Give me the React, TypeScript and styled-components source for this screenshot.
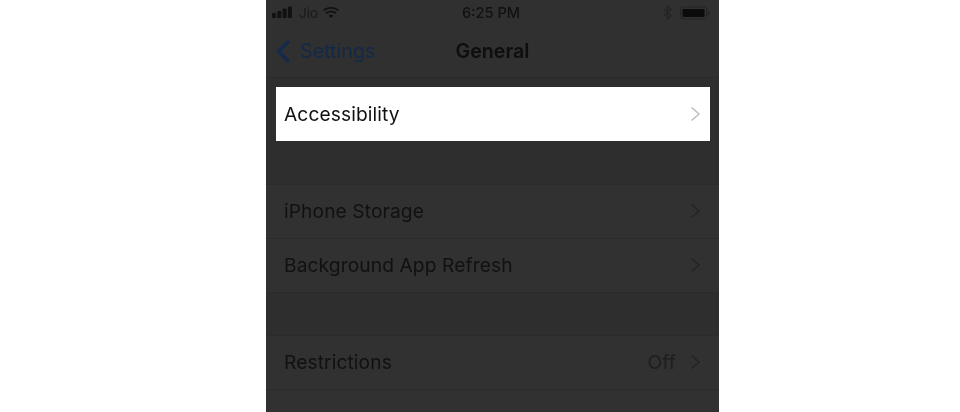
import React from "react";
import styled, { createGlobalStyle } from "styled-components";

const Global = createGlobalStyle`
  html, body { margin: 0; padding: 0; background: #fff; }
  body { font-family: "Inter", "Liberation Sans", Arial, sans-serif; overflow: hidden; }
`;

const Page = styled.div`
  width: 960px;
  height: 412px;
  display: flex;
  justify-content: flex-start;
  padding-left: 266px;
  box-sizing: border-box;
  overflow: hidden;
  background: #fff;
`;

const Phone = styled.div`
  width: 453px;
  height: 412px;
  background: #2e2e2e;
  display: flex;
  flex-direction: column;
  overflow: hidden;
  filter: blur(0.35px);
  & > * {
    flex-shrink: 0;
  }
`;

const StatusBar = styled.div`
  height: 25px;
  display: grid;
  grid-template-columns: 1fr auto 1fr;
  align-items: center;
  padding: 0 9px 0 6px;
  background: #303030;
  color: #111111;
  font-size: 14.6px;
  font-weight: 500;
`;

const StatusLeft = styled.div`
  display: flex;
  align-items: center;
  gap: 4px;
  color: #1a1a1a;
  font-size: 13.5px;
  font-weight: 400;
`;

const StatusRight = styled.div`
  display: flex;
  align-items: center;
  justify-content: flex-end;
  gap: 8px;
`;

const Nav = styled.div`
  height: 53px;
  display: grid;
  grid-template-columns: 1fr auto 1fr;
  align-items: center;
  padding: 0 9px;
  box-sizing: border-box;
  background: #303030;
  border-bottom: 1px solid #2b2b2b;
`;

const Back = styled.div`
  display: flex;
  align-items: center;
  gap: 8px;
  color: #142948;
  font-size: 19.7px;
`;

const Title = styled.div`
  color: #0e0e0e;
  font-size: 19.6px;
  font-weight: 600;
`;

const Group = styled.div<{ $top: number }>`
  margin-top: ${(p) => p.$top}px;
  display: flex;
  flex-direction: column;
`;

const Row = styled.div<{ $active?: boolean }>`
  height: 54px;
  box-sizing: border-box;
  display: flex;
  align-items: center;
  margin: ${(p) => (p.$active ? "0 9px 0 10px" : "0")};
  padding-left: ${(p) => (p.$active ? "8px" : "18px")};
  padding-right: ${(p) => (p.$active ? "9px" : "18px")};
  padding-bottom: ${(p) => (p.$active ? "0" : "2px")};
  background: ${(p) => (p.$active ? "#ffffff" : "#313131")};
  border-top: ${(p) => (p.$active ? "none" : "1px solid #2b2b2b")};
  color: #111111;
  font-size: 19.2px;
  letter-spacing: 0.1px;
`;

const Divider = styled.div`
  height: 1px;
  background: #2b2b2b;
`;

const Label = styled.span`
  flex: 1;
`;

const Value = styled.span`
  color: #1e1e1e;
  font-size: 19.2px;
  margin-right: 14px;
`;

const Tail = styled.div`
  height: 23px;
  background: #313131;
  border-top: 1px solid #2b2b2b;
`;

const Chevron = ({ color }: { color: string }) => (
  <svg width="11" height="16" viewBox="0 0 11 16" fill="none">
    <path d="M1.5 1.5 L9 8 L1.5 14.5" stroke={color} strokeWidth="1.5" />
  </svg>
);

const Signal = () => (
  <svg width="23" height="13" viewBox="0 0 23 13">
    <rect x="0" y="7" width="4" height="5" rx="1" fill="#111" />
    <rect x="5.3" y="5" width="4" height="7" rx="1" fill="#111" />
    <rect x="10.6" y="2.5" width="4" height="9.5" rx="1" fill="#111" />
    <rect x="15.9" y="0.5" width="4" height="11.5" rx="1" fill="#111" />
  </svg>
);

const Wifi = () => (
  <svg width="18" height="13" viewBox="0 0 17 13" fill="none" stroke="#111" strokeWidth="1.7">
    <path d="M1 4.5 C5 0.8 12 0.8 16 4.5" />
    <path d="M3.6 7.2 C6.2 4.9 10.8 4.9 13.4 7.2" />
    <path d="M8.5 12 L6 9.6 C7.4 8.5 9.6 8.5 11 9.6 Z" fill="#111" stroke="none" />
  </svg>
);

const Bluetooth = () => (
  <svg width="9" height="15" viewBox="0 0 9 15" fill="none" stroke="#232323" strokeWidth="1.2">
    <path d="M1 4 L8 10.5 L4.5 14 L4.5 1 L8 4.5 L1 11" />
  </svg>
);

const Battery = () => (
  <svg width="30" height="14" viewBox="0 0 30 14">
    <rect x="0.6" y="1" width="26" height="12" rx="2.5" fill="none" stroke="#242424" strokeWidth="1" />
    <rect x="2.5" y="3" width="22" height="8" rx="1" fill="#0b0b0b" />
    <rect x="27.8" y="5" width="1.6" height="4" rx="0.8" fill="#242424" />
  </svg>
);

const BackChevron = () => (
  <svg width="17" height="25" viewBox="0 0 17 25" fill="none">
    <path d="M14 2 L3.5 12.5 L14 23" stroke="#142a4c" strokeWidth="3.2" />
  </svg>
);

export default function App() {
  return (
    <Page>
      <Global />
      <Phone>
        <StatusBar>
          <StatusLeft>
            <Signal />
            <span>Jio</span>
            <Wifi />
          </StatusLeft>
          <span>6:25 PM</span>
          <StatusRight>
            <Bluetooth />
            <Battery />
          </StatusRight>
        </StatusBar>
        <Nav>
          <Back>
            <BackChevron />
            <span>Settings</span>
          </Back>
          <Title>General</Title>
        </Nav>
        <Group $top={9}>
          <Row $active>
            <Label>Accessibility</Label>
            <Chevron color="#bdbdc2" />
          </Row>
        </Group>
        <Group $top={43}>
          <Row>
            <Label>iPhone Storage</Label>
            <Chevron color="#242424" />
          </Row>
          <Row>
            <Label>Background App Refresh</Label>
            <Chevron color="#242424" />
          </Row>
          <Divider />
        </Group>
        <Group $top={42}>
          <Row>
            <Label>Restrictions</Label>
            <Value>Off</Value>
            <Chevron color="#242424" />
          </Row>
          <Tail />
        </Group>
      </Phone>
    </Page>
  );
}
